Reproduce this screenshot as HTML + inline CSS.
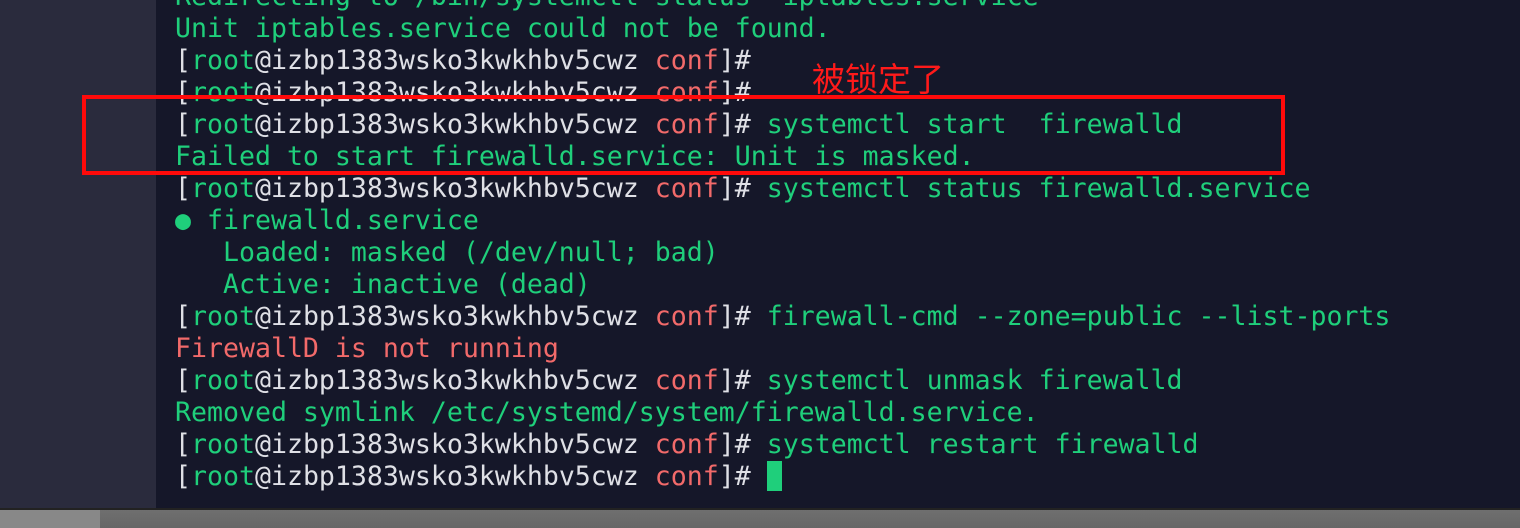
<!DOCTYPE html>
<html><head><meta charset="utf-8"><style>
html,body{margin:0;padding:0;width:1520px;height:526px;overflow:hidden;background:#151729;}
.left{position:absolute;left:0;top:0;width:156px;height:510px;background:#2a2b3d;}
.term{position:absolute;left:156px;top:0;width:1364px;height:510px;background:#151729;}
.bot{position:absolute;left:0;top:508px;width:1520px;height:18px;background:linear-gradient(#6f6f6f,#666);border-top:2px solid #222;}
.bot .tab{position:absolute;left:0;top:0;width:100px;height:18px;background:#888;}
pre{position:absolute;left:175px;top:-19px;margin:0;font-family:"DejaVu Sans Mono","Liberation Mono",monospace;font-size:26.57px;line-height:32px;color:#dfe0e6;}
.g{color:#1fcf7b}.r{color:#f26a6a}
.cur{display:inline-block;width:15px;height:30px;background:#1fcf7b;vertical-align:-6px;}
.box{position:absolute;left:82px;top:95px;width:1195px;height:72px;border:4px solid #ff0a0a;}
.cn{position:absolute;left:812px;top:57px;font-family:"Noto Sans CJK SC",sans-serif;font-size:33px;color:#ff1a1a;line-height:40px;}
</style></head><body>
<div class="left"></div>
<div class="term"></div>
<pre><span class="g">Redirecting to /bin/systemctl status  iptables.service</span>
<span class="g">Unit iptables.service could not be found.</span>
[<span class="g">root</span>@izbp1383wsko3kwkhbv5cwz <span class="r">conf</span>]# 
[<span class="g">root</span>@izbp1383wsko3kwkhbv5cwz <span class="r">conf</span>]# 
[<span class="g">root</span>@izbp1383wsko3kwkhbv5cwz <span class="r">conf</span>]# <span class="g">systemctl start  firewalld</span>
<span class="g">Failed to start firewalld.service: Unit is masked.</span>
[<span class="g">root</span>@izbp1383wsko3kwkhbv5cwz <span class="r">conf</span>]# <span class="g">systemctl status firewalld.service</span>
<span class="g">● firewalld.service</span>
<span class="g">   Loaded: masked (/dev/null; bad)</span>
<span class="g">   Active: inactive (dead)</span>
[<span class="g">root</span>@izbp1383wsko3kwkhbv5cwz <span class="r">conf</span>]# <span class="g">firewall-cmd --zone=public --list-ports</span>
<span class="r">FirewallD is not running</span>
[<span class="g">root</span>@izbp1383wsko3kwkhbv5cwz <span class="r">conf</span>]# <span class="g">systemctl unmask firewalld</span>
<span class="g">Removed symlink /etc/systemd/system/firewalld.service.</span>
[<span class="g">root</span>@izbp1383wsko3kwkhbv5cwz <span class="r">conf</span>]# <span class="g">systemctl restart firewalld</span>
[<span class="g">root</span>@izbp1383wsko3kwkhbv5cwz <span class="r">conf</span>]# <span class="cur"></span></pre>
<div class="box"></div>
<div class="cn">被锁定了</div>
<div class="bot"><div class="tab"></div></div>
</body></html>
